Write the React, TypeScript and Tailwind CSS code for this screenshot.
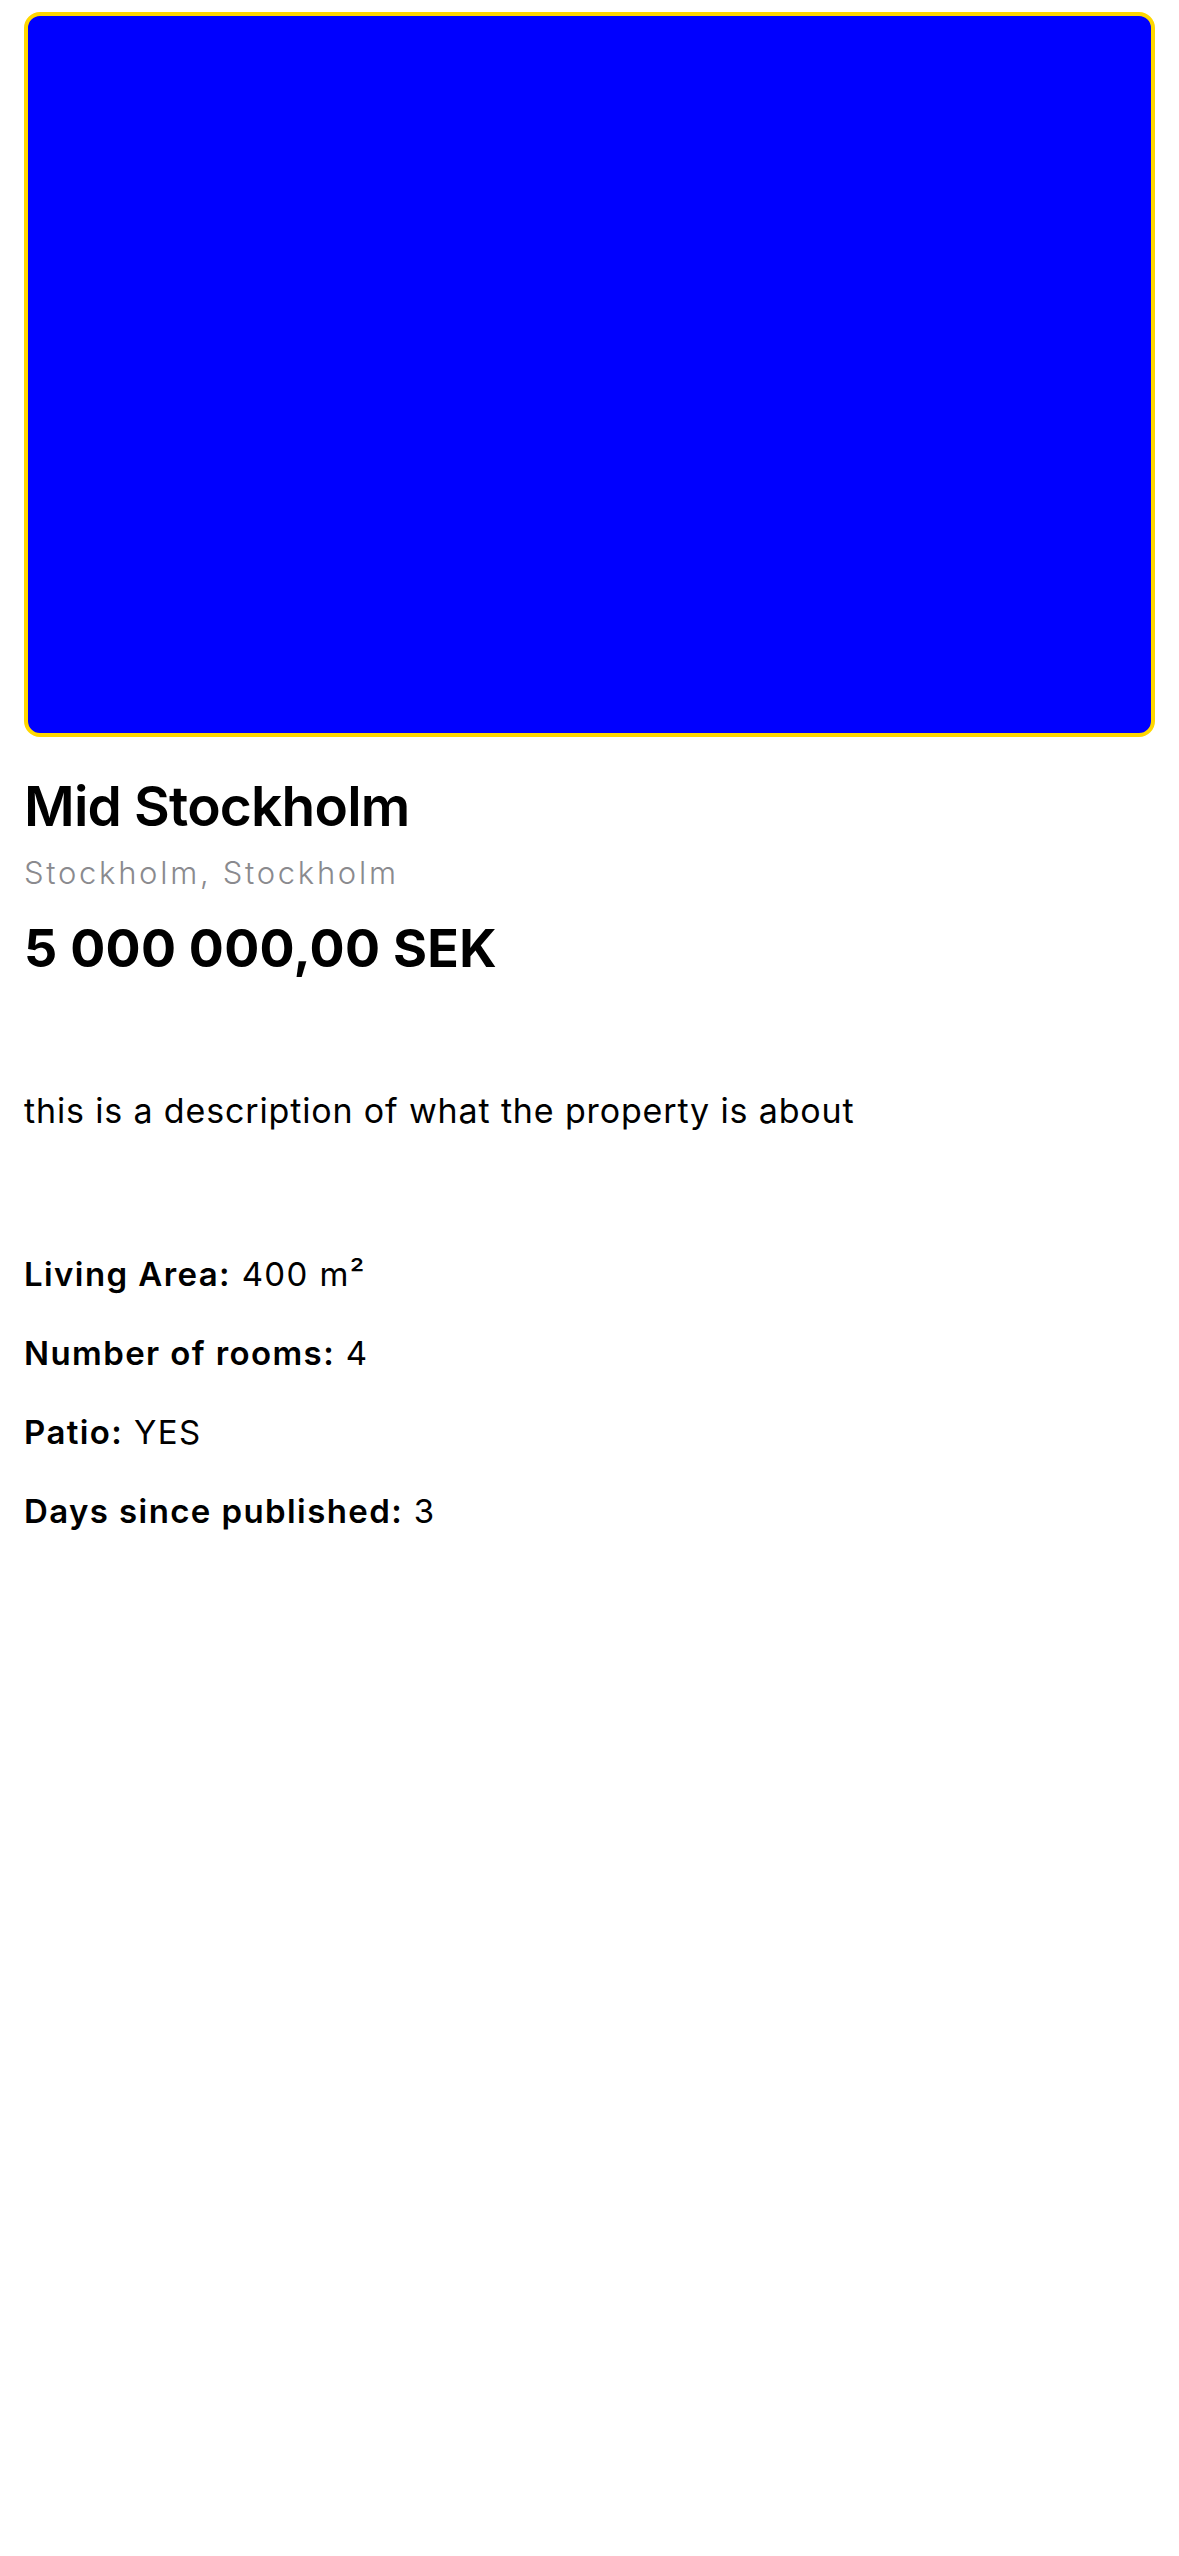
const details = [
  { label: 'Living Area:', value: '400 m²' },
  { label: 'Number of rooms:', value: '4' },
  { label: 'Patio:', value: 'YES' },
  { label: 'Days since published:', value: '3' },
]

export default function App() {
  return (
    <div className="min-h-screen bg-white px-6 pt-3 text-black" style={{ fontFamily: 'Inter, "Noto Sans", sans-serif' }}>
      <div className="h-[725px] w-full rounded-2xl border-4 border-[#ffd700] bg-[#0000ff]" />

      <h1 className="mt-9 text-[55px] font-semibold leading-[66px] tracking-[-0.8px]">Mid Stockholm</h1>
      <p className="mt-4 text-[31px] font-light leading-[36px] tracking-[2.7px] text-[#8a8a8e]">Stockholm, Stockholm</p>
      <p className="mt-[27px] text-[52px] font-bold leading-[62px] tracking-[0.3px]">5 000 000,00 SEK</p>

      <p className="mt-[110px] text-[34px] leading-[42px] tracking-[0.85px]">this is a description of what the property is about</p>

      <div className="mt-[122px] flex flex-col gap-[39px]">
        {details.map(({ label, value }) => (
          <p key={label} className="text-[33px] leading-[40px] tracking-[1.4px]">
            <span className="font-semibold">{label}</span> {value}
          </p>
        ))}
      </div>
    </div>
  )
}
